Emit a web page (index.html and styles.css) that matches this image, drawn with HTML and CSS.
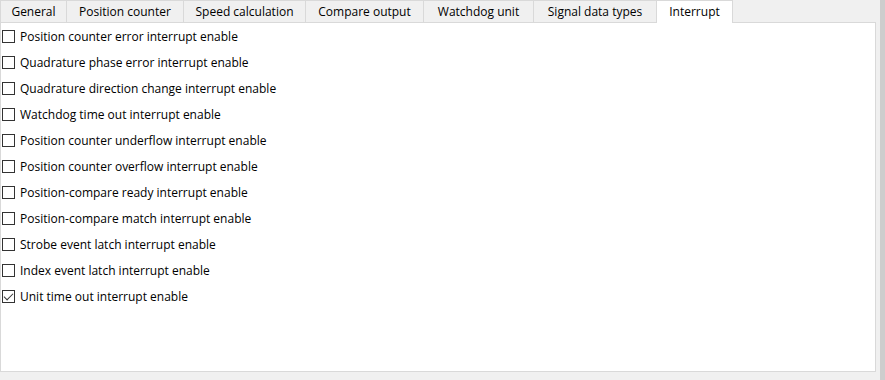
FILE: index.html
```html
<!DOCTYPE html>
<html>
  <head>
    <meta charset="utf-8" />
    <title>Interrupt settings</title>
    <link rel="stylesheet" href="styles.css">
  </head>
  <body>
    <div class="window">
      <div class="tabs">
        <div class="tab tab-general">General</div>
        <div class="tab tab-position">Position counter</div>
        <div class="tab tab-speed">Speed calculation</div>
        <div class="tab tab-compare">Compare output</div>
        <div class="tab tab-watchdog">Watchdog unit</div>
        <div class="tab tab-signal">Signal data types</div>
        <div class="tab tab-interrupt active">Interrupt</div>
      </div>
      <div class="panel">
        <label class="check"><input type="checkbox"><span class="box"></span>Position counter error interrupt enable</label>
        <label class="check"><input type="checkbox"><span class="box"></span>Quadrature phase error interrupt enable</label>
        <label class="check"><input type="checkbox"><span class="box"></span>Quadrature direction change interrupt enable</label>
        <label class="check"><input type="checkbox"><span class="box"></span>Watchdog time out interrupt enable</label>
        <label class="check"><input type="checkbox"><span class="box"></span>Position counter underflow interrupt enable</label>
        <label class="check"><input type="checkbox"><span class="box"></span>Position counter overflow interrupt enable</label>
        <label class="check"><input type="checkbox"><span class="box"></span>Position-compare ready interrupt enable</label>
        <label class="check"><input type="checkbox"><span class="box"></span>Position-compare match interrupt enable</label>
        <label class="check"><input type="checkbox"><span class="box"></span>Strobe event latch interrupt enable</label>
        <label class="check"><input type="checkbox"><span class="box"></span>Index event latch interrupt enable</label>
        <label class="check"><input type="checkbox" checked><span class="box"></span>Unit time out interrupt enable</label>
      </div>
    </div>
    <div class="scroll"></div>
  </body>
</html>
```

FILE: styles.css
```css
* {
    box-sizing: border-box;
}

html, body {
    margin: 0;
    height: 100%;
}

body {
    display: flex;
    background-color: #f0f0f0;
    font-family: 'Open Sans', 'Noto Sans', sans-serif;
    font-size: 12px;
    color: #000;
}

.window {
    width: 876px;
    height: 372px;
    display: flex;
    flex-direction: column;
}

.tabs {
    display: flex;
    height: 23px;
    border-bottom: 1px solid #d9d9d9;
}

.tab {
    line-height: 22px;
    text-align: center;
    border: 1px solid #d9d9d9;
    border-bottom: none;
    border-left: none;
    background-color: #f0f0f0;
}

.tab-general {
    width: 67px;
    border-left: 1px solid #d9d9d9;
}

.tab-position { width: 117px; }
.tab-speed { width: 122px; }
.tab-compare { width: 118px; }
.tab-watchdog { width: 110px; }
.tab-signal { width: 123px; }
.tab-interrupt { width: 76px; }

.tab.active {
    background-color: #fff;
    height: 23px;
}

.panel {
    flex: 1;
    background-color: #fff;
    border: 1px solid #d9d9d9;
    border-top: none;
    padding: 0 0 0 1px;
    display: flex;
    flex-direction: column;
}

.check {
    display: flex;
    align-items: center;
    height: 26px;
    gap: 5px;
}

.check input {
    display: none;
}

.box {
    width: 13px;
    height: 13px;
    border: 1px solid #333;
    background-color: #fff;
    position: relative;
}

.check input:checked + .box::after {
    content: '';
    position: absolute;
    left: 3px;
    top: 0px;
    width: 4px;
    height: 8px;
    border: solid #333;
    border-width: 0 1px 1px 0;
    transform: rotate(45deg);
}

.scroll {
    margin-left: 4px;
    width: 5px;
    background-color: #cdcdcd;
}
```
